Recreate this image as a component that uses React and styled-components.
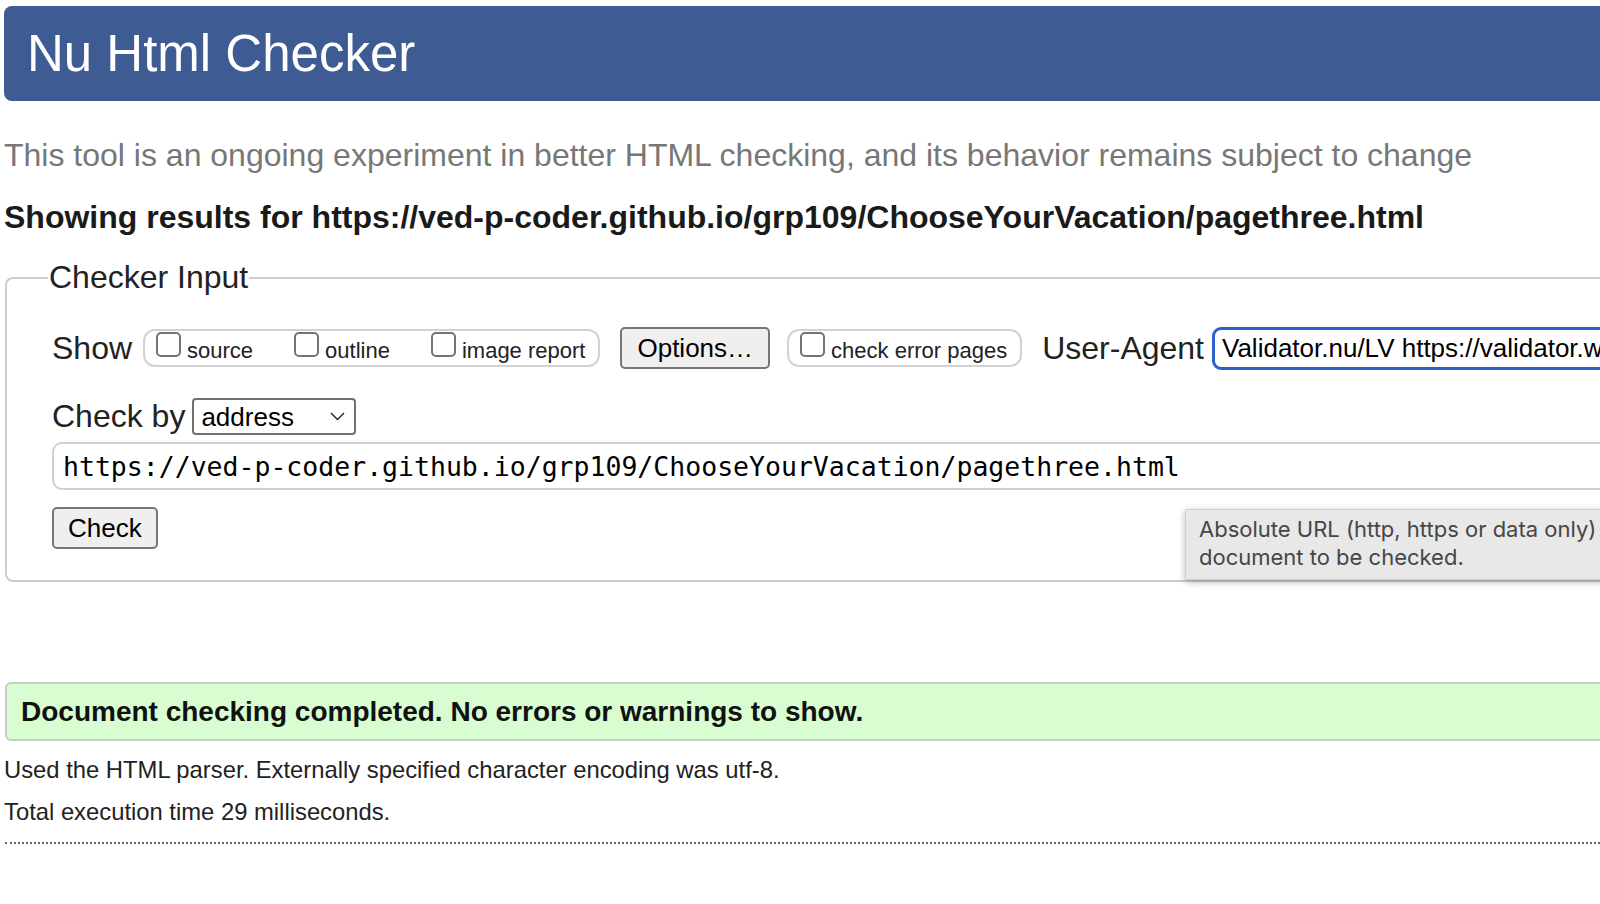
import React from 'react'
import styled, { createGlobalStyle } from 'styled-components'

const GlobalStyle = createGlobalStyle`
  html, body {
    margin: 0;
    padding: 0;
    overflow: hidden;
    background: #fff;
  }
  body {
    font-family: "Liberation Sans", Arial, Helvetica, sans-serif;
    color: #222;
  }
`

const Page = styled.div`
  width: 1900px;
  padding: 6px 0 0 4px;
`

const Header = styled.h1`
  margin: 0;
  height: 95px;
  box-sizing: border-box;
  padding: 2px 0 0 23px;
  background: #3e5c93;
  border-radius: 8px;
  color: #fff;
  font-size: 51px;
  font-weight: normal;
  line-height: 92px;
`

const Tagline = styled.p`
  margin: 34px 0 0 0;
  font-size: 32px;
  line-height: 40px;
  color: #777;
`

const Results = styled.h2`
  margin: 22px 0 0 0;
  font-size: 32px;
  line-height: 40px;
  font-weight: bold;
  color: #1a1a1a;
`

const Fieldset = styled.fieldset`
  margin: 22px 0 0 1px;
  padding: 30px 0 31px 45px;
  border: 2px solid #ccc;
  border-radius: 8px;
  min-width: 0;
`

const Legend = styled.legend`
  margin-left: -4px;
  padding: 0 1px;
  font-size: 32px;
  line-height: 37px;
  color: #222;
`

const Row = styled.div`
  display: flex;
  align-items: center;
  height: ${p => p.$h}px;
  margin-top: ${p => p.$mt || 0}px;
  position: relative;
`

const Label = styled.span`
  font-size: 32px;
  line-height: 37px;
  color: #222;
  margin-right: ${p => p.$mr || 0}px;
  margin-left: ${p => p.$ml || 0}px;
  white-space: nowrap;
`

const Group = styled.div`
  display: flex;
  align-items: flex-start;
  gap: 41px;
  height: 38px;
  box-sizing: border-box;
  padding: 0 13px 0 11px;
  border: 2px solid #d2d2d2;
  border-radius: 12px;
  margin-left: ${p => p.$ml || 0}px;
`

const Option = styled.label`
  display: flex;
  align-items: flex-start;
  gap: 6px;
  font-size: 22px;
  line-height: 22px;
  color: #222;
  white-space: nowrap;
`

const Box = styled.input.attrs({ type: 'checkbox' })`
  appearance: none;
  margin: 1px 0 0 0;
  width: 25px;
  height: 25px;
  box-sizing: border-box;
  border: 2px solid #747474;
  border-radius: 5px;
  background: #fff;
`

const OptText = styled.span`
  margin-top: 9px;
`

const Button = styled.button`
  height: 42px;
  box-sizing: border-box;
  padding: 0 ${p => p.$px || 14}px;
  margin-left: ${p => p.$ml || 0}px;
  border: 2px solid #767676;
  border-radius: 5px;
  background: #efefef;
  color: #000;
  font-family: "Liberation Sans", Arial, sans-serif;
  font-size: 26px;
  line-height: 38px;
`

const UAInput = styled.input`
  width: 700px;
  height: 43px;
  box-sizing: border-box;
  padding: 0 0 0 7px;
  border: 3px solid #2b60cd;
  border-radius: 9px;
  font-family: "Liberation Sans", Arial, sans-serif;
  font-size: 26px;
  color: #000;
  outline: none;
`

const SelectBox = styled.label`
  display: flex;
  align-items: center;
  justify-content: space-between;
  width: 164px;
  height: 37px;
  box-sizing: border-box;
  padding: 0 9px 0 7px;
  border: 2px solid #707070;
  border-radius: 4px;
  background: #fff;
  margin-left: 7px;
`

const Select = styled.select`
  appearance: none;
  border: none;
  background: transparent;
  padding: 0;
  font-family: "Liberation Sans", Arial, sans-serif;
  font-size: 26px;
  color: #000;
  outline: none;
`

const UrlInput = styled.input`
  display: block;
  width: 1800px;
  height: 48px;
  margin-top: 5px;
  box-sizing: border-box;
  padding: 0 0 0 9px;
  border: 2px solid #d0d0d0;
  border-radius: 10px;
  font-family: "DejaVu Sans Mono", "Liberation Mono", monospace;
  font-size: 26.5px;
  color: #000;
  outline: none;
`

const Tooltip = styled.div`
  position: absolute;
  left: 1133px;
  top: 2px;
  width: 600px;
  padding: 6px 0 8px 13px;
  background: #e8e8e8;
  border: 1px solid #cfcfcf;
  box-shadow: 0 2px 7px rgba(0, 0, 0, 0.28);
  font-family: Inter, "Noto Sans", sans-serif;
  font-size: 22px;
  line-height: 27.5px;
  color: #464646;
  white-space: nowrap;
`

const Success = styled.div`
  margin: 100px 0 0 1px;
  height: 59px;
  box-sizing: border-box;
  padding-left: 14px;
  background: #d7fdd0;
  border: 2px solid #cbcbcb;
  border-radius: 6px;
  font-size: 28px;
  font-weight: bold;
  line-height: 55px;
  color: #111;
`

const Info = styled.p`
  margin: ${p => p.$mt}px 0 0 0;
  font-size: 23.8px;
  line-height: 30px;
  color: #222;
`

const Dotted = styled.hr`
  margin: 15px 0 0 1px;
  border: none;
  border-top: 2px dotted #666;
  height: 0;
`

function Chevron() {
  return (
    <svg width="15" height="9" viewBox="0 0 15 9" fill="none">
      <polyline points="1,1 7.5,7.5 14,1" stroke="#222" strokeWidth="1.4" />
    </svg>
  )
}

export default function App() {
  const url = 'https://ved-p-coder.github.io/grp109/ChooseYourVacation/pagethree.html'
  return (
    <Page>
      <GlobalStyle />
      <Header>Nu Html Checker</Header>
      <Tagline>This tool is an ongoing experiment in better HTML checking, and its behavior remains subject to change</Tagline>
      <Results>Showing results for {url}</Results>
      <Fieldset>
        <Legend>Checker Input</Legend>
        <Row $h={44}>
          <Label>Show</Label>
          <Group $ml={11}>
            <Option><Box /><OptText>source</OptText></Option>
            <Option><Box /><OptText>outline</OptText></Option>
            <Option><Box /><OptText>image report</OptText></Option>
          </Group>
          <Button $ml={20} $px={15}>Options…</Button>
          <Group $ml={17}>
            <Option><Box /><OptText>check error pages</OptText></Option>
          </Group>
          <Label $ml={20} $mr={8}>User-Agent</Label>
          <UAInput defaultValue="Validator.nu/LV https://validator.w3.org/services" />
        </Row>
        <Row $h={41} $mt={26}>
          <Label>Check by</Label>
          <SelectBox>
            <Select defaultValue="address">
              <option value="address">address</option>
              <option value="file">file upload</option>
              <option value="text">text input</option>
            </Select>
            <Chevron />
          </SelectBox>
        </Row>
        <UrlInput defaultValue={url} />
        <Row $h={42} $mt={17}>
          <Button $px={14}>Check</Button>
          <Tooltip>
            Absolute URL (http, https or data only)<br />
            document to be checked.
          </Tooltip>
        </Row>
      </Fieldset>
      <Success>Document checking completed. No errors or warnings to show.</Success>
      <Info $mt={14}>Used the HTML parser. Externally specified character encoding was utf-8.</Info>
      <Info $mt={12}>Total execution time 29 milliseconds.</Info>
      <Dotted />
    </Page>
  )
}
